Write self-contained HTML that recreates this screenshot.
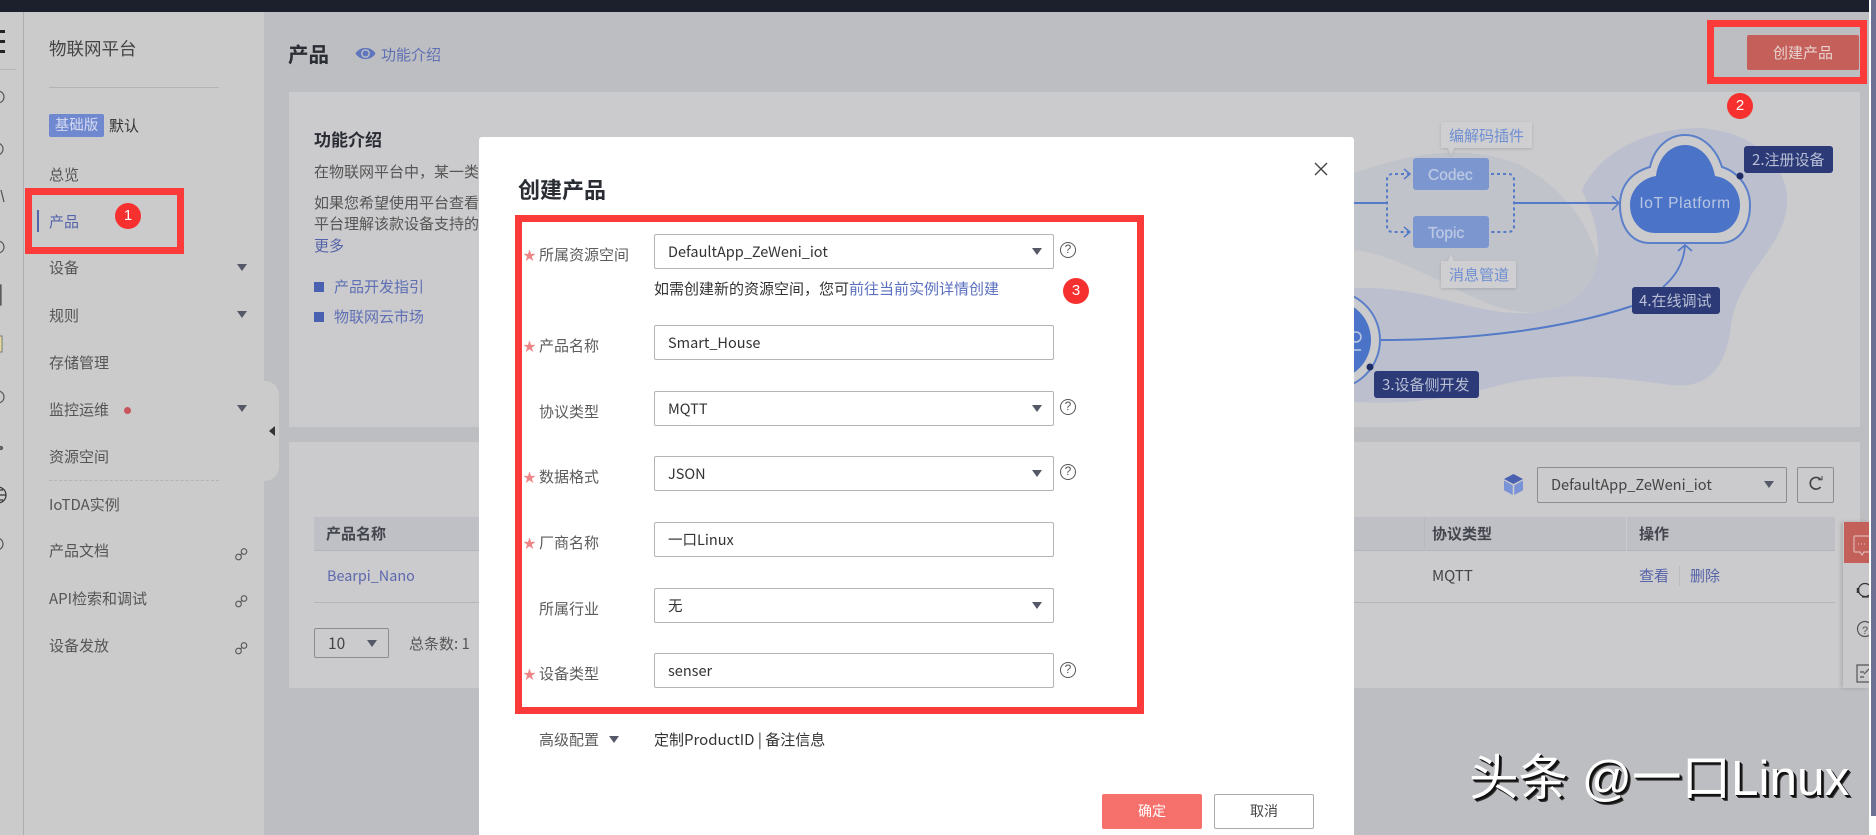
<!DOCTYPE html>
<html lang="zh"><head><meta charset="utf-8"><title>创建产品</title>
<style>
*{box-sizing:border-box}
html,body{margin:0;padding:0;width:1876px;height:835px;overflow:hidden;background:#fff}
body{position:relative;font-family:"Liberation Sans","Noto Sans CJK SC",sans-serif;font-size:15px;color:#444}
.a{position:absolute;white-space:nowrap}
.m{font-family:"Noto Sans CJK SC","Liberation Sans",sans-serif}
.t{position:absolute;white-space:nowrap;line-height:20px;font-family:"Noto Sans CJK SC","Liberation Sans",sans-serif}
.red{position:absolute;border:7px solid #fb3a3a}
.num{position:absolute;width:26px;height:26px;border-radius:50%;background:#f5302f;color:#fff;font-size:15px;line-height:26px;text-align:center}
.sel{position:absolute;left:654px;width:400px;height:35px;border:1px solid #b4b4b4;border-radius:2px;background:#fff;padding-left:13px;line-height:33px;font-family:"Noto Sans CJK SC","Liberation Sans",sans-serif;font-size:14.5px;color:#333}
.tri{position:absolute;width:0;height:0;border-left:5px solid transparent;border-right:5px solid transparent;border-top:7px solid #555866}
.lab{position:absolute;left:539px;line-height:20px;font-family:"Noto Sans CJK SC",sans-serif;font-size:15px;color:#5c5c5c}
.star{position:absolute;left:523px;color:#ef8587;font-size:13px;line-height:20px}
.help{position:absolute;left:1060px;width:16px;height:16px;border:1.5px solid #555;border-radius:50%;font-size:12px;line-height:13px;text-align:center;color:#555}
.mi{position:absolute;left:49px;line-height:20px;font-family:"Noto Sans CJK SC",sans-serif;font-size:15px;color:#555}
</style></head><body>
<!-- page background -->
<div class="a" style="left:0;top:0;width:1869px;height:835px;background:#bdbec2"></div>
<div class="a" style="left:1871px;top:0;width:5px;height:816px;background:#6d7193"></div>
<div class="a" style="left:0;top:0;width:1869px;height:12px;background:#1c202c"></div>

<!-- left rail -->
<div class="a" style="left:0;top:12px;width:24px;height:823px;background:#cbcbcc;border-right:1px solid #aeaeb0"></div>
<div class="a" style="left:0;top:30px;width:5px;height:3px;background:#222"></div>
<div class="a" style="left:0;top:40px;width:5px;height:3px;background:#222"></div>
<div class="a" style="left:0;top:50px;width:5px;height:3px;background:#222"></div>
<div class="a" style="left:0;top:69px;width:16px;height:1px;background:#b5b5b6"></div>
<svg class="a" style="left:0;top:0" width="24" height="600" fill="none" stroke="#555" stroke-width="1.2">
<circle cx="-2" cy="97" r="6"/><circle cx="-3" cy="149" r="6"/><path d="M1 190l3 12"/><circle cx="-2" cy="247" r="6"/>
<rect x="-4" y="285" width="5" height="20" fill="#666"/><rect x="-4" y="336" width="6" height="16" fill="#e8d99a" stroke="#888"/>
<circle cx="-2" cy="397" r="6"/><circle cx="1" cy="448" r="1.5" fill="#777"/>
<circle cx="-2" cy="495" r="8" stroke="#333"/><path d="M-2 487v16M-9 495h15M-7 490h10M-7 500h10" stroke="#333"/>
<circle cx="-3" cy="544" r="6"/></svg>

<!-- sidebar -->
<div class="a" style="left:24px;top:12px;width:240px;height:823px;background:#cbcbcc"></div>
<div class="t" style="left:49px;top:39px;font-size:17.5px;color:#444">物联网平台</div>
<div class="a" style="left:49px;top:87px;width:170px;height:1px;background:#b4b4b6"></div>
<div class="a m" style="left:49px;top:114px;width:55px;height:23px;border-radius:2px;background:#7088cf;color:#d5daf0;font-size:14.5px;line-height:22px;text-align:center">基础版</div>
<div class="t" style="left:109px;top:116px;font-size:15px;color:#333">默认</div>
<div class="mi" style="top:165px">总览</div>
<div class="a" style="left:37px;top:210px;width:2px;height:22px;background:#5563a8"></div>
<div class="mi" style="top:212px;color:#5563a8">产品</div>
<div class="mi" style="top:258px">设备</div><div class="tri" style="left:237px;top:264px"></div>
<div class="mi" style="top:306px">规则</div><div class="tri" style="left:237px;top:311px"></div>
<div class="mi" style="top:353px">存储管理</div>
<div class="mi" style="top:400px">监控运维</div><div class="tri" style="left:237px;top:405px"></div>
<div class="a" style="left:124px;top:407px;width:7px;height:7px;border-radius:50%;background:#c9555c"></div>
<div class="mi" style="top:447px">资源空间</div>
<div class="a" style="left:49px;top:480px;width:170px;border-top:1px dashed #b4b4b6"></div>
<div class="mi" style="top:495px">IoTDA实例</div>
<div class="mi" style="top:541px">产品文档</div>
<div class="mi" style="top:589px">API检索和调试</div>
<div class="mi" style="top:636px">设备发放</div>
<svg class="a" style="left:235px;top:548px" width="14" height="110" fill="none" stroke="#555" stroke-width="1.1">
<g><circle cx="3.5" cy="9" r="2.8"/><circle cx="9" cy="3.5" r="2.8"/><path d="M5.5 7L7 5.5"/></g>
<g transform="translate(0,47)"><circle cx="3.5" cy="9" r="2.8"/><circle cx="9" cy="3.5" r="2.8"/><path d="M5.5 7L7 5.5"/></g>
<g transform="translate(0,94)"><circle cx="3.5" cy="9" r="2.8"/><circle cx="9" cy="3.5" r="2.8"/><path d="M5.5 7L7 5.5"/></g></svg>
<div class="a" style="left:264px;top:381px;width:15px;height:100px;background:#cbcbcc;border-radius:0 14px 14px 0"></div>
<div class="a" style="left:269px;top:426px;width:0;height:0;border-top:5px solid transparent;border-bottom:5px solid transparent;border-right:6px solid #333"></div>

<!-- header -->
<div class="t" style="left:288px;top:43px;font-size:20.5px;font-weight:700;color:#2b2d35">产品</div>
<svg class="a" style="left:355px;top:45px" width="21" height="17"><path d="M0.5 8.5C5 1 16 1 20.5 8.5C16 16 5 16 .5 8.5Z" fill="#5f75bd"/><circle cx="10.5" cy="8.5" r="4.4" fill="#bdbec2"/><circle cx="10.5" cy="8.5" r="3" fill="#5f75bd"/></svg>
<div class="t" style="left:381px;top:45px;font-size:15px;color:#5f6fb3">功能介绍</div>

<!-- card 1 -->
<div class="a" style="left:289px;top:92px;width:1571px;height:335px;background:#cbcbcd;overflow:hidden"></div>
<div class="t" style="left:314px;top:129px;font-size:17px;font-weight:700;color:#2b2d35">功能介绍</div>
<div class="t" style="left:314px;top:162px;font-size:15px;color:#555">在物联网平台中，某一类</div>
<div class="t" style="left:314px;top:193px;font-size:15px;color:#555">如果您希望使用平台查看</div>
<div class="t" style="left:314px;top:214px;font-size:15px;color:#555">平台理解该款设备支持的</div>
<div class="t" style="left:314px;top:236px;font-size:15px;color:#5563a8">更多</div>
<div class="a" style="left:314px;top:282px;width:10px;height:10px;background:#4a60b0"></div>
<div class="t" style="left:334px;top:277px;font-size:15px;color:#5f6fb3">产品开发指引</div>
<div class="a" style="left:314px;top:312px;width:10px;height:10px;background:#4a60b0"></div>
<div class="t" style="left:334px;top:307px;font-size:15px;color:#5f6fb3">物联网云市场</div>

<!-- diagram -->
<svg class="a" style="left:0;top:0" width="1876" height="835" font-family="'Liberation Sans',sans-serif">
<defs><filter id="s" x="-20%" y="-20%" width="140%" height="150%"><feDropShadow dx="0" dy="1" stdDeviation="1.5" flood-color="#000" flood-opacity=".15"/></filter></defs>
<path d="M1354 173C1420 150 1470 145 1520 165C1570 190 1600 240 1600 280C1596 310 1550 320 1500 308C1450 290 1400 255 1354 250Z" fill="#c1c3cb"/>
<path d="M1354 288C1430 285 1480 320 1540 312C1580 305 1600 280 1598 245C1596 215 1585 200 1582 190C1600 150 1650 128 1700 128C1760 132 1790 170 1787 205C1783 250 1740 270 1731 325C1727 362 1712 390 1670 385C1620 378 1560 370 1500 385C1440 402 1400 404 1354 402Z" fill="#bcc0ce"/>
<path d="M1354 203H1387M1514 203H1618" stroke="#557ac8" stroke-width="2" fill="none"/>
<path d="M1612 196l7 7-7 7" stroke="#557ac8" stroke-width="1.5" fill="none"/>
<path d="M1410 174H1393Q1387 174 1387 180V226Q1387 232 1393 232H1410M1491 174H1508Q1514 174 1514 180V226Q1514 232 1508 232H1491" stroke="#557ac8" stroke-width="2" stroke-dasharray="3 3" fill="none"/>
<path d="M1404 169l6 5-6 5M1404 227l6 5-6 5" stroke="#557ac8" stroke-width="1.5" fill="none"/>
<rect x="1413" y="158" width="76" height="32" rx="3" fill="#7c97cf"/><rect x="1413" y="216" width="76" height="32" rx="3" fill="#7c97cf"/>
<text x="1428" y="180" font-size="15.5" fill="#bcc8e3" stroke="#bcc8e3" stroke-width=".3">Codec</text><text x="1428" y="238" font-size="15.5" fill="#bcc8e3" stroke="#bcc8e3" stroke-width=".3">Topic</text>
<path d="M1441 122h91v26h-78l-3 7-3-7h-7z" fill="#cfcfd1" filter="url(#s)"/><path d="M1441 261h7l3-7 3 7h62v27h-75z" fill="#cfcfd1" filter="url(#s)"/>
<text x="1449" y="141" font-size="15" fill="#6f8fd2" font-family="'Noto Sans CJK SC',sans-serif">编解码插件</text>
<text x="1449" y="280" font-size="15" fill="#6f8fd2" font-family="'Noto Sans CJK SC',sans-serif">消息管道</text>
<path d="M1650 243C1632 243 1620 228 1620 205C1620 185 1632 172 1650 167C1654 148 1668 135 1685 135C1702 135 1716 148 1722 167C1738 172 1750 187 1750 205C1750 228 1738 243 1720 243Z" fill="#cbcbcd" stroke="#5b7fc9" stroke-width="2"/>
<path d="M1655 233C1640 233 1630 220 1630 205C1630 190 1642 178 1656 176C1658 158 1670 145 1685 145C1700 145 1712 158 1715 176C1730 178 1740 190 1740 205C1740 220 1730 233 1715 233Z" fill="#4b74c9"/>
<text x="1685" y="208" text-anchor="middle" font-size="15.5" fill="#b9c6e2" letter-spacing=".6">IoT Platform</text>
<circle cx="1740" cy="176" r="3.5" fill="#1f2d66"/>
<rect x="1744" y="146" width="89" height="27" rx="3" fill="#2c3a78"/>
<text x="1752" y="165" font-size="15" fill="#b9bfd4" font-family="'Noto Sans CJK SC',sans-serif">2.注册设备</text>
<path d="M1381 340C1470 340 1560 330 1632 306" stroke="#557ac8" stroke-width="2" fill="none"/>
<path d="M1663 287C1676 276 1684 262 1685 245M1678 251l7-6 7 6" stroke="#557ac8" stroke-width="1.8" fill="none"/>
<rect x="1632" y="287" width="88" height="27" rx="3" fill="#2c3a78"/>
<text x="1639" y="306" font-size="15" fill="#b9bfd4" font-family="'Noto Sans CJK SC',sans-serif">4.在线调试</text>
<circle cx="1331" cy="340" r="49" fill="#cbcbcd" stroke="#5b7fc9" stroke-width="2"/><circle cx="1331" cy="340" r="40" fill="#4b74c9"/>
<circle cx="1356" cy="337" r="5" fill="none" stroke="#bcc8e4" stroke-width="1.5"/><path d="M1354 350h7" stroke="#bcc8e4" stroke-width="1.5"/>
<circle cx="1370" cy="367" r="3.5" fill="#1f2d66"/>
<rect x="1374" y="371" width="105" height="27" rx="3" fill="#2c3a78"/>
<text x="1382" y="390" font-size="15" fill="#b9bfd4" font-family="'Noto Sans CJK SC',sans-serif">3.设备侧开发</text>
</svg>

<!-- card 2 -->
<div class="a" style="left:289px;top:442px;width:1571px;height:246px;background:#cbcbcd"></div>
<div class="a" style="left:314px;top:517px;width:1521px;height:34px;background:#bfc0c5;border-bottom:1px solid #b4b5b8"></div>
<div class="a" style="left:1424px;top:517px;width:1px;height:34px;background:#b9babf"></div>
<div class="a" style="left:1626px;top:517px;width:1px;height:34px;background:#c9cacd"></div>
<div class="t" style="left:326px;top:524px;font-size:15px;font-weight:700;color:#44464e">产品名称</div>
<div class="t" style="left:1432px;top:524px;font-size:15px;font-weight:700;color:#44464e">协议类型</div>
<div class="t" style="left:1639px;top:524px;font-size:15px;font-weight:700;color:#44464e">操作</div>
<div class="t" style="left:327px;top:566px;font-size:14.4px;color:#5d68ad">Bearpi_Nano</div>
<div class="t" style="left:1432px;top:566px;font-size:15px;color:#444">MQTT</div>
<div class="t" style="left:1639px;top:566px;font-size:15px;color:#5563a8">查看</div>
<div class="a" style="left:1679px;top:566px;width:1px;height:20px;background:#bbb"></div>
<div class="t" style="left:1690px;top:566px;font-size:15px;color:#5563a8">删除</div>
<div class="a" style="left:314px;top:602px;width:1521px;height:1px;background:#b4b5b7"></div>
<div class="a m" style="left:314px;top:628px;width:75px;height:30px;border:1px solid #8c8c90;border-radius:2px;font-size:15.5px;line-height:28px;padding-left:13px;color:#444">10</div>
<div class="tri" style="left:367px;top:640px"></div>
<div class="t" style="left:409px;top:634px;font-size:15px;color:#555">总条数: 1</div>
<svg class="a" style="left:1503px;top:473px" width="21" height="23"><path d="M10.5 1L20 6 10.5 11 1 6Z" fill="#4a60b0"/><path d="M1 7.5L9.7 12.2V22L1 17.3ZM20 7.5L11.3 12.2V22L20 17.3Z" fill="#7a92d6"/></svg>
<div class="a m" style="left:1537px;top:467px;width:250px;height:36px;border:1px solid #8c8c90;border-radius:2px;padding-left:13px;line-height:34px;font-size:14.6px;color:#444">DefaultApp_ZeWeni_iot</div>
<div class="tri" style="left:1764px;top:481px"></div>
<div class="a" style="left:1797px;top:467px;width:37px;height:36px;border:1px solid #8c8c90;border-radius:2px"></div>
<svg class="a" style="left:1807px;top:475px" width="17" height="17"><path d="M13.5 4.5A5.8 5.8 0 1 0 13.5 12" fill="none" stroke="#444" stroke-width="1.7"/><path d="M11 4.8h4V1" fill="none" stroke="#444" stroke-width="1"/></svg>

<!-- right floating toolbar -->
<div class="a" style="left:1843px;top:522px;width:26px;height:166px;background:#c9c9cb;box-shadow:-2px 0 4px rgba(0,0,0,.15)"></div>
<div class="a" style="left:1844px;top:522px;width:25px;height:41px;background:#c4605a"></div>
<svg class="a" style="left:1844px;top:522px" width="25" height="166" fill="none" stroke="#555" stroke-width="1.2">
<path d="M25 14H11Q10 14 10 15V29Q10 30 11 30H16L18 33 20 30H25" stroke="#e0b5b2"/><path d="M14 22h1M17 22h1M20 22h1" stroke="#e0b5b2"/>
<circle cx="21" cy="68" r="6.5" stroke="#333"/><path d="M14 66v5" stroke="#333" stroke-width="2.5"/><path d="M18 75h7" stroke="#333"/>
<circle cx="21" cy="107" r="7.5"/><text x="18" y="112" font-size="11" fill="#555" stroke="none">?</text>
<path d="M25 143H13V160H25M16 150h4M16 155h4M20 152l5-5"/></svg>

<!-- dim create button & box -->
<div class="a m" style="left:1747px;top:35px;width:112px;height:35px;background:#c45f5a;border-radius:2px;color:#e8d3d0;font-size:15px;line-height:35px;text-align:center">创建产品</div>
<div class="red" style="left:1707px;top:20px;width:160px;height:64px"></div>
<div class="num" style="left:1727px;top:93px">2</div>
<div class="red" style="left:25px;top:188px;width:159px;height:66px"></div>
<div class="num" style="left:115px;top:203px">1</div>

<!-- watermark -->
<div class="a" style="left:1469px;top:748px;font-size:49.5px;line-height:62px;color:#fff;text-shadow:1px 1px 0 #111,2px 2px 0 #111,3px 3px 0 #333;font-family:'Liberation Sans','Noto Sans CJK SC',sans-serif">头条 @一口Linux</div>

<!-- modal -->
<div class="a" style="left:479px;top:137px;width:875px;height:698px;background:#fff;border-radius:3px 3px 0 0"></div>
<svg class="a" style="left:1314px;top:162px" width="14" height="14"><path d="M1 1L13 13M13 1L1 13" stroke="#444" stroke-width="1.4"/></svg>
<div class="t" style="left:518px;top:177px;font-size:22px;line-height:24px;font-weight:700;color:#2b2d35">创建产品</div>
<div class="red" style="left:515px;top:215px;width:629px;height:499px"></div>
<div class="star" style="top:246px">★</div><div class="lab" style="top:245px">所属资源空间</div>
<div class="sel" style="top:234px">DefaultApp_ZeWeni_iot</div><div class="tri" style="left:1032px;top:248px"></div><div class="help" style="top:242px">?</div>
<div class="t" style="left:654px;top:279px;font-size:15px;color:#333">如需创建新的资源空间，您可<span style="color:#5a6fbf">前往当前实例详情创建</span></div>
<div class="num" style="left:1063px;top:278px">3</div>
<div class="star" style="top:337px">★</div><div class="lab" style="top:336px">产品名称</div>
<div class="sel" style="top:325px">Smart_House</div>
<div class="lab" style="top:402px">协议类型</div>
<div class="sel" style="top:391px">MQTT</div><div class="tri" style="left:1032px;top:405px"></div><div class="help" style="top:399px">?</div>
<div class="star" style="top:468px">★</div><div class="lab" style="top:467px">数据格式</div>
<div class="sel" style="top:456px">JSON</div><div class="tri" style="left:1032px;top:470px"></div><div class="help" style="top:464px">?</div>
<div class="star" style="top:534px">★</div><div class="lab" style="top:533px">厂商名称</div>
<div class="sel" style="top:522px">一口Linux</div>
<div class="lab" style="top:599px">所属行业</div>
<div class="sel" style="top:588px">无</div><div class="tri" style="left:1032px;top:602px"></div>
<div class="star" style="top:665px">★</div><div class="lab" style="top:664px">设备类型</div>
<div class="sel" style="top:653px">senser</div><div class="help" style="top:662px">?</div>
<div class="lab" style="top:730px">高级配置</div><div class="tri" style="left:609px;top:736px"></div>
<div class="t" style="left:654px;top:730px;font-size:15px;color:#333">定制ProductID | 备注信息</div>
<div class="a m" style="left:1102px;top:794px;width:100px;height:35px;background:#f7716c;border-radius:2px;color:#fff;font-size:14px;line-height:35px;text-align:center">确定</div>
<div class="a m" style="left:1214px;top:794px;width:100px;height:35px;background:#fff;border:1px solid #aaa;border-radius:2px;color:#444;font-size:14px;line-height:33px;text-align:center">取消</div>
</body></html>
